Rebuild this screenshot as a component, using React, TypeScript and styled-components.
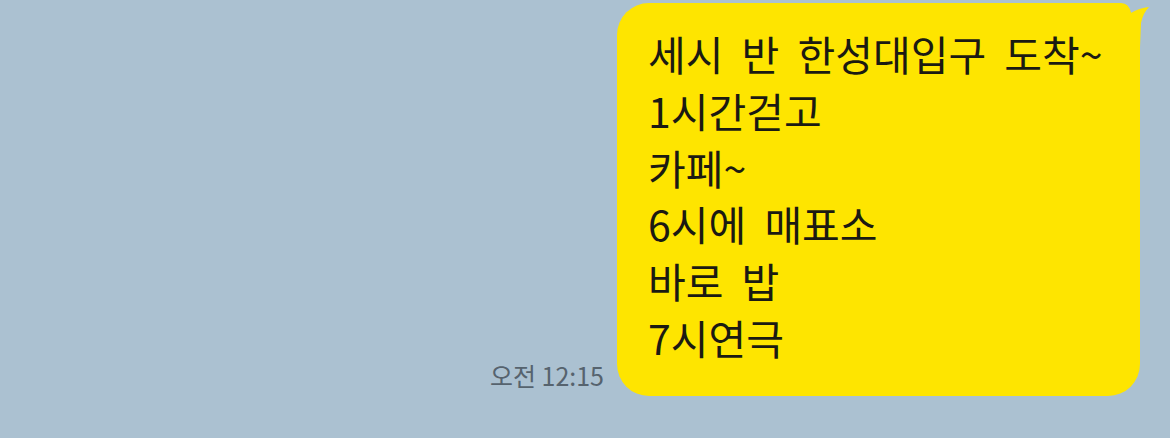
import React from "react";
import styled, { createGlobalStyle } from "styled-components";

const Global = createGlobalStyle`
  html, body { margin: 0; padding: 0; background: #abc1d1; }
  body { width: 1170px; height: 438px; overflow: hidden; font-family: "Noto Sans CJK KR", "Noto Sans", sans-serif; }
`;

const Screen = styled.div`
  width: 1170px;
  height: 438px;
  background: #abc1d1;
  box-sizing: border-box;
  padding: 3px 30px 0 0;
  display: flex;
  justify-content: flex-end;
  align-items: flex-start;
`;

const Row = styled.div`
  display: flex;
  align-items: flex-end;
  gap: 13px;
`;

const Time = styled.span`
  font-family: "Noto Sans CJK KR", sans-serif;
  font-size: 25px;
  color: #56636e;
  line-height: 1;
  margin-bottom: 8px;
  white-space: nowrap;
`;

const Bubble = styled.div`
  position: relative;
  background: #fee500;
  border-radius: 32px;
  width: 523px;
  height: 393px;
  box-sizing: border-box;
  padding: 22px 20px 0 31px;
`;

const Line = styled.div`
  font-family: "Noto Sans CJK KR", sans-serif;
  font-size: 41px;
  line-height: 56.8px;
  word-spacing: 9px;
  color: #1b1a12;
  white-space: nowrap;
`;

const Tail = styled.svg`
  position: absolute;
  top: 0;
  right: -11px;
  width: 44px;
  height: 44px;
`;

const lines = [
  "세시 반 한성대입구 도착~",
  "1시간걷고",
  "카페~",
  "6시에 매표소",
  "바로 밥",
  "7시연극",
];

export default function App() {
  return (
    <>
      <Global />
      <Screen>
        <Row>
          <Time>오전 12:15</Time>
          <Bubble>
            <Tail viewBox="0 0 44 44">
              <path
                d="M0 0 L14 0 Q22 0 24 10 Q32 5 42 4 Q36 10 34 20 L33 44 L0 44 Z"
                fill="#fee500"
              />
            </Tail>
            {lines.map((l) => (
              <Line key={l}>{l}</Line>
            ))}
          </Bubble>
        </Row>
      </Screen>
    </>
  );
}
